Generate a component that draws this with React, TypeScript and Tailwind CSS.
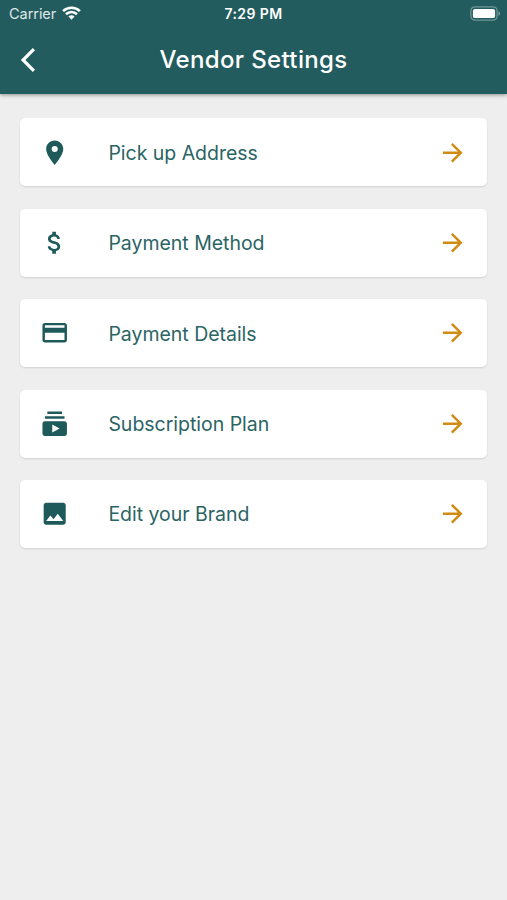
import React from 'react';
import {
  MdArrowForward,
  MdAttachMoney,
  MdImage,
  MdLocationOn,
  MdPayment,
  MdSubscriptions,
} from 'react-icons/md';

const items = [
  { label: 'Pick up Address', icon: MdLocationOn },
  { label: 'Payment Method', icon: MdAttachMoney },
  { label: 'Payment Details', icon: MdPayment },
  { label: 'Subscription Plan', icon: MdSubscriptions },
  { label: 'Edit your Brand', icon: MdImage },
];

function WifiIcon() {
  return (
    <svg width="19" height="14" viewBox="0 0 19 14" fill="none" stroke="white" strokeWidth="2.6">
      <path d="M1.1 5.1a12.1 12.1 0 0 1 16.8 0" />
      <path d="M4 8.3a7.9 7.9 0 0 1 11 0" />
      <path d="M9.5 13.7 6.4 10.6a4.4 4.4 0 0 1 6.2 0z" fill="white" stroke="none" />
    </svg>
  );
}

function BatteryIcon() {
  return (
    <svg width="31" height="15" viewBox="0 0 31 15" fill="none">
      <rect x="0.9" y="0.9" width="26.2" height="13.2" rx="4" stroke="white" strokeOpacity="0.35" strokeWidth="1.3" />
      <rect x="2.9" y="2.9" width="22.2" height="9.2" rx="2.2" fill="white" />
      <path d="M28.5 5.2c1.9.7 1.9 3.9 0 4.6z" fill="white" fillOpacity="0.45" />
    </svg>
  );
}

function BackIcon() {
  return (
    <svg className="ml-[20px]" width="16" height="26" viewBox="0 0 16 26" fill="none" stroke="white" strokeWidth="3.2">
      <path d="M13.9 2.2 3.1 13l10.8 10.8" />
    </svg>
  );
}

function StatusBar() {
  return (
    <div className="grid h-[26px] grid-cols-3 items-center text-white">
      <div className="flex items-center gap-[6px] pl-[9px]">
        <span className="pt-px text-[14.5px] leading-[18px] tracking-[-0.05px] text-white/85">Carrier</span>
        <WifiIcon />
      </div>
      <span className="pt-[2px] text-center text-[14px] font-semibold leading-[18px] tracking-[0.4px]">7:29 PM</span>
      <div className="flex justify-end pr-[6px]">
        <BatteryIcon />
      </div>
    </div>
  );
}

export default function App() {
  return (
    <div className="flex min-h-screen flex-col bg-[#eeeeee] font-['Inter',sans-serif]">
      <header className="h-[94px] bg-[#225c5e] shadow-[0_1px_4px_rgba(0,0,0,0.4)]">
        <StatusBar />
        <div className="grid h-[68px] grid-cols-[60px_1fr_60px] items-center">
          <BackIcon />
          <h1 className="text-center text-[24px] font-medium leading-[30px] tracking-[0.36px] text-white">
            Vendor Settings
          </h1>
        </div>
      </header>

      <main className="flex flex-col gap-[22.4px] px-[20.4px] pt-[24.4px]">
        {items.map(({ label, icon: Icon }) => (
          <button
            key={label}
            className="flex h-[68px] items-center rounded-[5px] bg-white pl-[19.6px] pr-[18.8px] text-left shadow-[0_1px_2px_rgba(0,0,0,0.12)]"
          >
            <Icon className="shrink-0 text-[#1f5a5b]" size={29.4} />
            <span className="ml-[39px] flex-1 whitespace-nowrap pt-px text-[19.5px] leading-[26px] tracking-[-0.02px] text-[#2a6464]">
              {label}
            </span>
            <MdArrowForward className="shrink-0 text-[#d18a12]" size={29.4} />
          </button>
        ))}
      </main>
    </div>
  );
}
